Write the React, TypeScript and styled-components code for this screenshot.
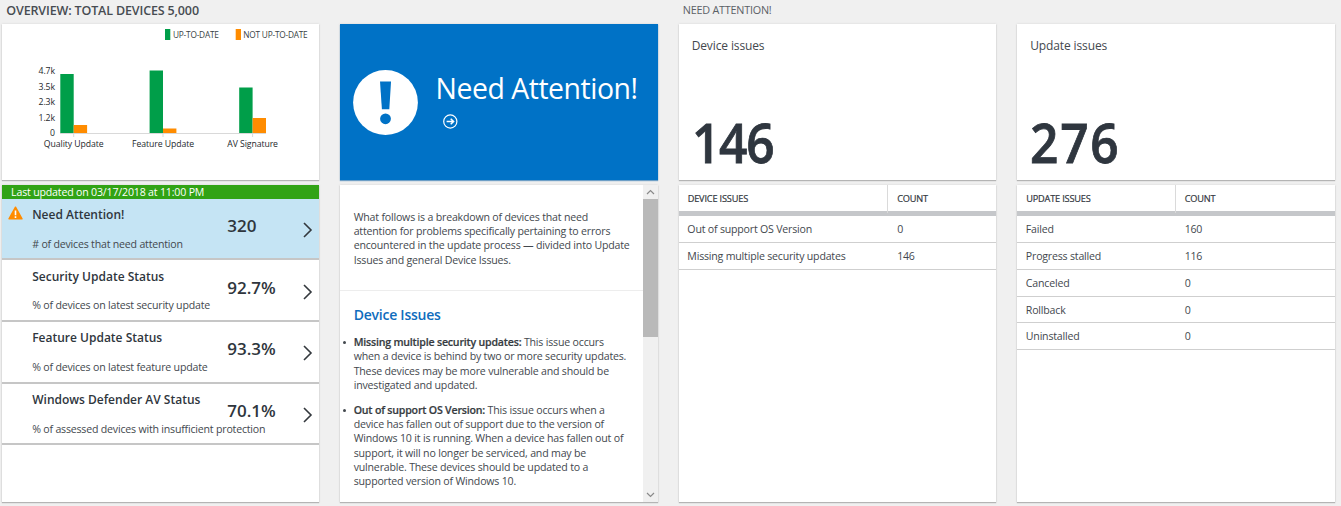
import React from 'react';
import styled, { createGlobalStyle } from 'styled-components';

const GlobalStyle = createGlobalStyle`
  * { box-sizing: border-box; }
  body {
    margin: 0;
    background: #f0f0f0;
    color: #43484e;
    font-family: "Open Sans", "Noto Sans", sans-serif;
    overflow: hidden;
  }
`;

const Page = styled.main`
  display: grid;
  grid-template-columns: repeat(4, 317.6px);
  column-gap: 20.9px;
  padding-left: 1.7px;
  height: 506px;
`;

const Column = styled.section`
  display: flex;
  flex-direction: column;
`;

const Heading = styled.h2<{ $strong?: boolean }>`
  margin: 0;
  height: 24px;
  padding-left: ${(p) => (p.$strong ? 4.6 : 4.2)}px;
  line-height: ${(p) => (p.$strong ? 21 : 20)}px;
  font-size: ${(p) => (p.$strong ? 12.5 : 10.8)}px;
  font-weight: ${(p) => (p.$strong ? 600 : 400)};
  letter-spacing: ${(p) => (p.$strong ? -0.14 : -0.22)}px;
  color: ${(p) => (p.$strong ? '#474c52' : '#5b6066')};
  white-space: nowrap;
`;

const Card = styled.div`
  background: #fff;
  box-shadow: 0 1px 1px #b4b4b4, 0 0 2px #d4d4d4;
`;

const TopCard = styled(Card)`
  height: 156px;
  margin-bottom: 5px;
`;

const BottomCard = styled(Card)`
  height: 317px;
`;

const Banner = styled(TopCard)`
  display: flex;
  align-items: center;
  gap: 17.4px;
  padding-left: 13px;
  background: #0072c6;
  color: #fff;
  box-shadow: 0 1px 1px #6e9fc6, 0 0 2px #d4d4d4;
`;

const BannerText = styled.div`
  display: flex;
  flex-direction: column;
  gap: 8px;
  padding-bottom: 6px;
  svg { margin-left: 7.5px; }
`;

const BannerTitle = styled.div`
  font-size: 28.4px;
  line-height: 36px;
  letter-spacing: -0.46px;
  white-space: nowrap;
`;

const Updated = styled.div`
  height: 13.6px;
  padding-left: 9.4px;
  background: #31a315;
  color: #fff;
  font-size: 10.6px;
  line-height: 15px;
  letter-spacing: -0.18px;
`;

const StatusRow = styled.div<{ $active?: boolean }>`
  display: grid;
  grid-template-columns: 30.5px 195px 75.5px 17px;
  height: 61.65px;
  border-bottom: 2px solid #c6c6c6;
  background: ${(p) => (p.$active ? '#c5e4f4' : '#fff')};
  svg { display: block; }
`;

const WarningCell = styled.div`
  padding: 7px 0 0 6px;
`;

const StatusText = styled.div`
  white-space: nowrap;
`;

const StatusName = styled.div`
  padding-top: 7.4px;
  font-size: 12px;
  font-weight: 600;
  line-height: 18px;
  color: #2f363d;
`;

const StatusNote = styled.div`
  padding-top: 11.6px;
  font-size: 10.6px;
  line-height: 16px;
  letter-spacing: -0.2px;
`;

const StatusValue = styled.div`
  padding-top: 16.4px;
  font-size: 17px;
  font-weight: 600;
  line-height: 22px;
  color: #2f363d;
`;

const ChevronCell = styled.div`
  padding-top: 23.4px;
`;

const ScrollCard = styled(BottomCard)`
  display: flex;
  justify-content: space-between;
`;

const Article = styled.article`
  width: 302.6px;
  font-size: 10.6px;
  line-height: 14.3px;
  letter-spacing: -0.19px;
  white-space: nowrap;
`;

const Intro = styled.p`
  margin: 0;
  height: 106px;
  padding: 24.8px 0 0 13.5px;
  border-bottom: 1px solid #ededed;
`;

const ArticleTitle = styled.h3`
  margin: 0;
  padding: 14px 0 0 13.5px;
  font-size: 14px;
  line-height: 19px;
  font-weight: 600;
  letter-spacing: -0.24px;
  color: #0f6cbd;
`;

const IssueList = styled.ul`
  margin: 0;
  padding: 11px 0 0 13.5px;
  list-style: none;
`;

const Issue = styled.li`
  position: relative;
  margin-bottom: 10.6px;
  &::before {
    content: '';
    position: absolute;
    left: -10.5px;
    top: 6px;
    width: 3px;
    height: 3px;
    border-radius: 50%;
    background: #43484e;
  }
  b {
    font-weight: 600;
    letter-spacing: -0.2px;
    color: #363b41;
    -webkit-text-stroke: 0.2px currentColor;
  }
`;

const Scrollbar = styled.div`
  display: flex;
  flex-direction: column;
  justify-content: space-between;
  width: 15px;
  background: #f0f0f0;
  svg { display: block; }
`;

const Thumb = styled.div`
  height: 138px;
  margin-bottom: auto;
  background: #b9b9b9;
`;

const CountCard = styled(TopCard)`
  display: flex;
  flex-direction: column;
  justify-content: space-between;
  padding: 13px 13px 2px;
`;

const CountLabel = styled.div`
  font-size: 12px;
  line-height: 18px;
  letter-spacing: -0.12px;
`;

const CountNumber = styled.div<{ $tracking: number }>`
  height: 72px;
  font-size: 54px;
  font-weight: 600;
  line-height: 72px;
  letter-spacing: ${(p) => p.$tracking}px;
  color: #2f363f;
  transform: scaleX(0.92);
  transform-origin: left;
  -webkit-text-stroke: 0.8px currentColor;
`;

const TableHead = styled.div<{ $split: number }>`
  display: grid;
  grid-template-columns: ${(p) => p.$split}px 1fr;
  height: 31px;
  border-bottom: 5px solid #c5c7ca;
  font-size: 9.2px;
  line-height: 28px;
  letter-spacing: -0.17px;
  color: #33383e;
  -webkit-text-stroke: 0.2px currentColor;
`;

const HeadCell = styled.div`
  padding-left: 9px;
  & + & { border-left: 1px solid #dadada; }
`;

const TableRow = styled.div<{ $split: number }>`
  display: grid;
  grid-template-columns: ${(p) => p.$split}px 1fr;
  height: 26.85px;
  border-bottom: 1px solid #cfcfcf;
  font-size: 10.6px;
  line-height: 27px;
  letter-spacing: -0.2px;
`;

const Cell = styled.div`
  padding-left: 8.7px;
  & + & { padding-left: 10px; }
`;

const bars = [
  { label: 'Quality Update', x: 58.3, up: 59, not: 8 },
  { label: 'Feature Update', x: 147.6, up: 62.5, not: 4.5 },
  { label: 'AV Signature', x: 237.2, up: 45.5, not: 15 },
];

const ticks = [
  { label: '4.7k', y: 50 },
  { label: '3.5k', y: 65.5 },
  { label: '2.3k', y: 81 },
  { label: '1.2k', y: 97 },
  { label: '0', y: 112 },
];

const ChartSvg = styled.svg`
  display: block;
  font-size: 8.7px;
  letter-spacing: -0.08px;
  fill: #24282c;
`;

const LegendText = styled.text`
  font-size: 8.3px;
  letter-spacing: -0.22px;
  fill: #3a3f45;
`;

function Chart() {
  return (
    <ChartSvg width="317" height="156" viewBox="0 0 317 156">
      <rect x="163" y="5" width="5.3" height="11" fill="#009e49" />
      <LegendText x="171" y="13.6">UP-TO-DATE</LegendText>
      <rect x="233.7" y="5" width="5.3" height="11" fill="#ff8c00" />
      <LegendText x="241.3" y="13.6">NOT UP-TO-DATE</LegendText>
      <path d="M58 109.5H264" stroke="#d9d9d9" />
      {ticks.map((t) => (
        <text key={t.label} x="53" y={t.y} textAnchor="end">{t.label}</text>
      ))}
      {bars.map((b) => (
        <g key={b.label}>
          <rect x={b.x} y={109 - b.up} width="13.4" height={b.up} fill="#009e49" />
          <rect x={b.x + 13.4} y={109 - b.not} width="13.4" height={b.not} fill="#ff8c00" />
          <path d={`M${b.x + 13.4} 110v3`} stroke="#d9d9d9" />
          <text x={b.x + 13.4} y="122.6" textAnchor="middle">{b.label}</text>
        </g>
      ))}
    </ChartSvg>
  );
}

const statuses = [
  { name: 'Need Attention!', note: '# of devices that need attention', value: '320', active: true },
  { name: 'Security Update Status', note: '% of devices on latest security update', value: '92.7%' },
  { name: 'Feature Update Status', note: '% of devices on latest feature update', value: '93.3%' },
  { name: 'Windows Defender AV Status', note: '% of assessed devices with insufficient protection', value: '70.1%' },
];

function Warning() {
  return (
    <svg width="15" height="14" viewBox="0 0 15 14">
      <path d="M7.5 1.2 14 12.8H1Z" fill="#ff8c00" stroke="#ff8c00" strokeWidth="1.4" strokeLinejoin="round" />
      <path d="M7.5 4.6v4.6M7.5 10.3v1.7" stroke="#fff" strokeWidth="1.6" />
    </svg>
  );
}

function IssueTable({ title, split, rows }: { title: string; split: number; rows: [string, number][] }) {
  return (
    <BottomCard>
      <TableHead $split={split}>
        <HeadCell>{title}</HeadCell>
        <HeadCell>COUNT</HeadCell>
      </TableHead>
      {rows.map(([name, count]) => (
        <TableRow key={name} $split={split}>
          <Cell>{name}</Cell>
          <Cell>{count}</Cell>
        </TableRow>
      ))}
    </BottomCard>
  );
}

export default function App() {
  return (
    <Page>
      <GlobalStyle />
      <Column>
        <Heading $strong>OVERVIEW: TOTAL DEVICES 5,000</Heading>
        <TopCard><Chart /></TopCard>
        <BottomCard>
          <Updated>Last updated on 03/17/2018 at 11:00 PM</Updated>
          {statuses.map((s) => (
            <StatusRow key={s.name} $active={s.active}>
              <WarningCell>{s.active && <Warning />}</WarningCell>
              <StatusText>
                <StatusName>{s.name}</StatusName>
                <StatusNote>{s.note}</StatusNote>
              </StatusText>
              <StatusValue>{s.value}</StatusValue>
              <ChevronCell>
                <svg width="10" height="16" viewBox="0 0 10 16" fill="none" stroke="#33383d" strokeWidth="1.6">
                  <path d="m1 1 7 7-7 7" />
                </svg>
              </ChevronCell>
            </StatusRow>
          ))}
        </BottomCard>
      </Column>

      <Column>
        <Heading />
        <Banner>
          <svg width="65" height="65" viewBox="0 0 65 65">
            <circle cx="32.5" cy="32.5" r="32.4" fill="#fff" />
            <path d="M27 11.5h11l-1.7 27.7h-7.4Z" fill="#0072c6" />
            <circle cx="32.5" cy="48.8" r="5.4" fill="#0072c6" />
          </svg>
          <BannerText>
            <BannerTitle>Need Attention!</BannerTitle>
            <svg width="15" height="15" viewBox="0 0 15 15" fill="none" stroke="#fff">
              <circle cx="7.3" cy="7.5" r="6.6" strokeWidth="1.2" />
              <path d="M3.6 7.5h6.6M7.7 4.7l2.9 2.8-2.9 2.8" strokeWidth="1.5" />
            </svg>
          </BannerText>
        </Banner>
        <ScrollCard>
          <Article>
            <Intro>
              What follows is a breakdown of devices that need<br />
              attention for problems specifically pertaining to errors<br />
              encountered in the update process — divided into Update<br />
              Issues and general Device Issues.
            </Intro>
            <ArticleTitle>Device Issues</ArticleTitle>
            <IssueList>
              <Issue>
                <b>Missing multiple security updates:</b> This issue occurs<br />
                when a device is behind by two or more security updates.<br />
                These devices may be more vulnerable and should be<br />
                investigated and updated.
              </Issue>
              <Issue>
                <b>Out of support OS Version:</b> This issue occurs when a<br />
                device has fallen out of support due to the version of<br />
                Windows 10 it is running. When a device has fallen out of<br />
                support, it will no longer be serviced, and may be<br />
                vulnerable. These devices should be updated to a<br />
                supported version of Windows 10.
              </Issue>
            </IssueList>
          </Article>
          <Scrollbar>
            <svg width="15" height="14" viewBox="0 0 15 14" fill="none" stroke="#8a8a8a" strokeWidth="1.2">
              <path d="m4 9 3.5-3.5L11 9" />
            </svg>
            <Thumb />
            <svg width="15" height="14" viewBox="0 0 15 14" fill="none" stroke="#8a8a8a" strokeWidth="1.2">
              <path d="m4 5 3.5 3.5L11 5" />
            </svg>
          </Scrollbar>
        </ScrollCard>
      </Column>

      <Column>
        <Heading>NEED ATTENTION!</Heading>
        <CountCard>
          <CountLabel>Device issues</CountLabel>
          <CountNumber $tracking={-1.4}>146</CountNumber>
        </CountCard>
        <IssueTable
          title="DEVICE ISSUES"
          split={208.5}
          rows={[['Out of support OS Version', 0], ['Missing multiple security updates', 146]]}
        />
      </Column>

      <Column>
        <Heading />
        <CountCard>
          <CountLabel>Update issues</CountLabel>
          <CountNumber $tracking={1.9}>276</CountNumber>
        </CountCard>
        <IssueTable
          title="UPDATE ISSUES"
          split={157.5}
          rows={[['Failed', 160], ['Progress stalled', 116], ['Canceled', 0], ['Rollback', 0], ['Uninstalled', 0]]}
        />
      </Column>
    </Page>
  );
}
